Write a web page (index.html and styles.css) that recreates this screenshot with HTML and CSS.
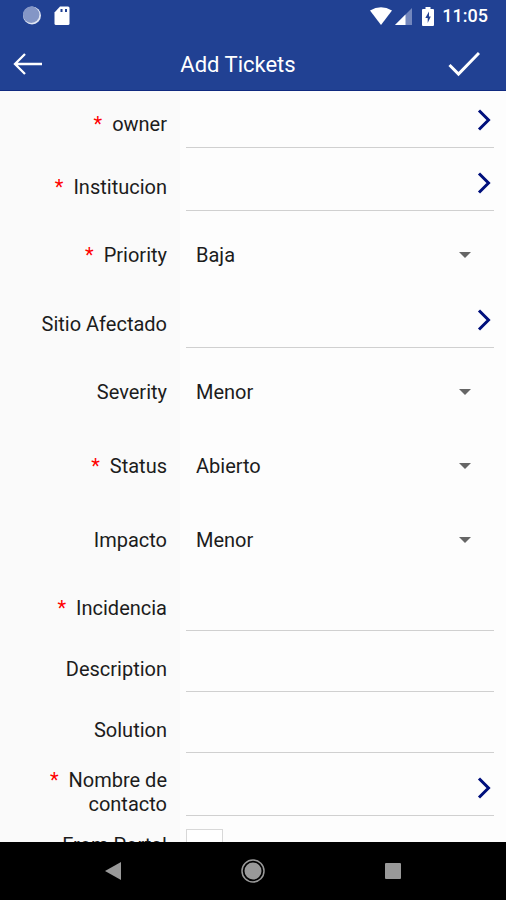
FILE: index.html
```html
<!DOCTYPE html>
<html lang="es">
<head>
<meta charset="utf-8">
<meta name="viewport" content="width=device-width, initial-scale=1">
<title>Add Tickets</title>
<link rel="stylesheet" href="styles.css">
</head>
<body>
<svg class="defs" aria-hidden="true">
  <symbol id="chevron" viewBox="0 0 14 22"><path d="M2 1.500 11.500 11 2 20.500" fill="none" stroke="#00107c" stroke-width="3"/></symbol>
  <symbol id="caret" viewBox="0 0 12 6"><path d="M0 0h12L6 6z" fill="#666"/></symbol>
</svg>
<header class="top">
  <div class="status">
    <div class="status-group">
      <svg width="20" height="20" viewBox="0 0 20 20"><circle cx="10" cy="9.500" r="9" fill="#dfe5f3"/><circle cx="9.200" cy="8.800" r="8.200" fill="#8496c6"/></svg>
      <svg width="16" height="20" viewBox="0 0 16 20"><path d="M6 .5h8q1.500 0 1.500 1.500v15.500q0 1.500-1.500 1.500H2q-1.500 0-1.500-1.500V6.500z" fill="#fff"/><path d="M7.500 3v3M12 3v3" stroke="#214193" stroke-width="2"/></svg>
    </div>
    <div class="status-group status-right">
      <svg width="22" height="18" viewBox="0 0 22 18"><path d="M0 3.500Q11-3 22 3.500L11 18z" fill="#fff"/></svg>
      <svg class="signal" width="17" height="17" viewBox="0 0 17 17"><path d="M0 17 17 0v17z" fill="#7387bd"/><path d="M0 17 10.500 6.500V17z" fill="#fff"/></svg>
      <svg class="battery" width="12" height="19" viewBox="0 0 12 19"><path d="M3.500 0h5v2H11q1 0 1 1v15q0 1-1 1H1q-1 0-1-1V3q0-1 1-1h2.500z" fill="#fff"/><path d="M7 4.500 3.300 11h2.400v5L8.800 9.500H7z" fill="#214193"/></svg>
      <span class="clock">11:05</span>
    </div>
  </div>
  <div class="bar">
    <button class="bar-button" type="button" aria-label="Back"><svg width="30" height="24" viewBox="0 0 30 24"><path d="M29 12H2M12 2 2 12l10 10" fill="none" stroke="#fff" stroke-width="2.300"/></svg></button>
    <h1 class="title">Add Tickets</h1>
    <button class="bar-button save" type="submit" form="ticket" aria-label="Save"><svg width="32" height="26" viewBox="0 0 32 26"><path d="M1.500 14 10.500 23 31 2" fill="none" stroke="#fff" stroke-width="3"/></svg></button>
  </div>
</header>
<main class="content">
  <form id="ticket" class="form">
    <div class="row first">
      <label class="label" for="owner"><span class="req">*</span>owner</label>
      <div class="cell"><div class="lookup"><input id="owner" type="text"><button type="button" aria-label="Choose owner"><svg width="14" height="22"><use href="#chevron"/></svg></button></div></div>
    </div>
    <div class="row">
      <label class="label" for="inst"><span class="req">*</span>Institucion</label>
      <div class="cell"><div class="lookup"><input id="inst" type="text"><button type="button" aria-label="Choose institucion"><svg width="14" height="22"><use href="#chevron"/></svg></button></div></div>
    </div>
    <div class="row">
      <label class="label" for="priority"><span class="req">*</span>Priority</label>
      <div class="cell"><div class="choice"><select id="priority"><option>Baja</option></select><svg class="caret" width="12" height="6"><use href="#caret"/></svg></div></div>
    </div>
    <div class="row">
      <label class="label" for="sitio">Sitio Afectado</label>
      <div class="cell"><div class="lookup"><input id="sitio" type="text"><button type="button" aria-label="Choose sitio"><svg width="14" height="22"><use href="#chevron"/></svg></button></div></div>
    </div>
    <div class="row">
      <label class="label" for="severity">Severity</label>
      <div class="cell"><div class="choice"><select id="severity"><option>Menor</option></select><svg class="caret" width="12" height="6"><use href="#caret"/></svg></div></div>
    </div>
    <div class="row">
      <label class="label" for="state"><span class="req">*</span>Status</label>
      <div class="cell"><div class="choice"><select id="state"><option>Abierto</option></select><svg class="caret" width="12" height="6"><use href="#caret"/></svg></div></div>
    </div>
    <div class="row">
      <label class="label" for="impacto">Impacto</label>
      <div class="cell"><div class="choice"><select id="impacto"><option>Menor</option></select><svg class="caret" width="12" height="6"><use href="#caret"/></svg></div></div>
    </div>
    <div class="row">
      <label class="label" for="incidencia"><span class="req">*</span>Incidencia</label>
      <div class="cell"><input class="text" id="incidencia" type="text"></div>
    </div>
    <div class="row">
      <label class="label" for="description">Description</label>
      <div class="cell"><input class="text" id="description" type="text"></div>
    </div>
    <div class="row">
      <label class="label" for="solution">Solution</label>
      <div class="cell"><input class="text" id="solution" type="text"></div>
    </div>
    <div class="row">
      <label class="label" for="contacto"><span><span class="req">*</span>Nombre de contacto</span></label>
      <div class="cell"><div class="lookup"><input id="contacto" type="text"><button type="button" aria-label="Choose contacto"><svg width="14" height="22"><use href="#chevron"/></svg></button></div></div>
    </div>
    <div class="row check-row">
      <label class="label" for="portal">From Portal</label>
      <div class="cell"><input class="check" id="portal" type="checkbox"></div>
    </div>
  </form>
</main>
<nav class="nav">
  <button type="button" aria-label="Back"><svg width="16" height="18" viewBox="0 0 16 18"><path d="M0 9 16 0v18z" fill="#999"/></svg></button>
  <button type="button" aria-label="Home"><svg width="24" height="24" viewBox="0 0 24 24"><circle cx="12" cy="12" r="11" fill="none" stroke="#999" stroke-width="1.500"/><circle cx="12" cy="12" r="8.500" fill="#999"/></svg></button>
  <button type="button" aria-label="Recent apps"><svg width="16" height="16" viewBox="0 0 16 16"><rect width="16" height="16" rx="1" fill="#999"/></svg></button>
</nav>
</body>
</html>
```
FILE: styles.css
```css
* { box-sizing: border-box; }

body {
  margin: 0;
  height: 100vh;
  display: flex;
  flex-direction: column;
  background: #fdfdfd;
  color: #1c1c1c;
  font: 20px/24px Roboto, sans-serif;
}

svg { display: block; flex: none; }
.defs { position: absolute; width: 0; height: 0; }

button {
  padding: 0;
  border: 0;
  background: none;
  display: flex;
  align-items: center;
  justify-content: center;
}

input, select {
  font: inherit;
  color: inherit;
  border: 0;
  border-radius: 0;
  background: none;
  min-width: 0;
  margin: 0;
  outline: 0;
}

.top {
  flex: none;
  background: #214193;
  color: #fff;
  border-bottom: 1px solid #102a80;
}

.status {
  display: flex;
  justify-content: space-between;
  height: 32px;
  padding: 0 18px 0 22px;
}

.status-group { display: flex; align-items: center; gap: 12px; }
.status-right { gap: 0; }
.signal { margin-left: 3px; }
.battery { margin: 0 8px 0 10px; }
.clock { font-size: 18px; font-weight: 500; }

.bar {
  display: grid;
  grid-template-columns: 48px 1fr 64px;
  align-items: center;
  height: 58px;
  padding: 6px 18px 0 4px;
}

.bar-button { width: 48px; height: 48px; }
.save { justify-self: end; }

.title {
  margin: 0;
  padding-top: 2px;
  font-size: 22px;
  line-height: 28px;
  font-weight: 400;
  text-align: center;
}

.content { flex: 1; min-height: 0; overflow-y: auto; scrollbar-width: none; }

.row { display: grid; grid-template-columns: 180px 1fr; }

.label {
  display: flex;
  align-items: center;
  justify-content: flex-end;
  padding: 14px 13px 0 36px;
  background: #fafafa;
  text-align: right;
}

.req { color: #f00; margin-right: 10px; }
.cell { padding: 14px 12px 0 6px; }
.first .label, .first .cell { padding-top: 8px; }

.lookup {
  display: flex;
  height: 49px;
  border-bottom: 1px solid #d0d0d0;
}

.lookup input { flex: 1; }
.lookup button { width: 20px; padding-bottom: 7px; }

.text {
  display: block;
  width: 100%;
  height: 47px;
  border-bottom: 1px solid #d0d0d0;
}

.choice { display: grid; align-items: center; height: 60px; }
.choice select {
  grid-area: 1 / 1;
  height: 100%;
  padding: 0 40px 0 10px;
  appearance: none;
}
.caret { grid-area: 1 / 1; justify-self: end; margin-right: 23px; pointer-events: none; }

.check-row .label { padding-bottom: 6px; }
.check-row .cell { padding-top: 13px; }

.check {
  display: block;
  width: 37px;
  height: 36px;
  border: 1px solid #d8d8d8;
  background: #fff;
  appearance: none;
}

.check:checked { background: #214193; }

.nav {
  flex: none;
  display: flex;
  justify-content: center;
  gap: 92px;
  height: 58px;
  background: #000;
}

.nav button { width: 48px; }
```
